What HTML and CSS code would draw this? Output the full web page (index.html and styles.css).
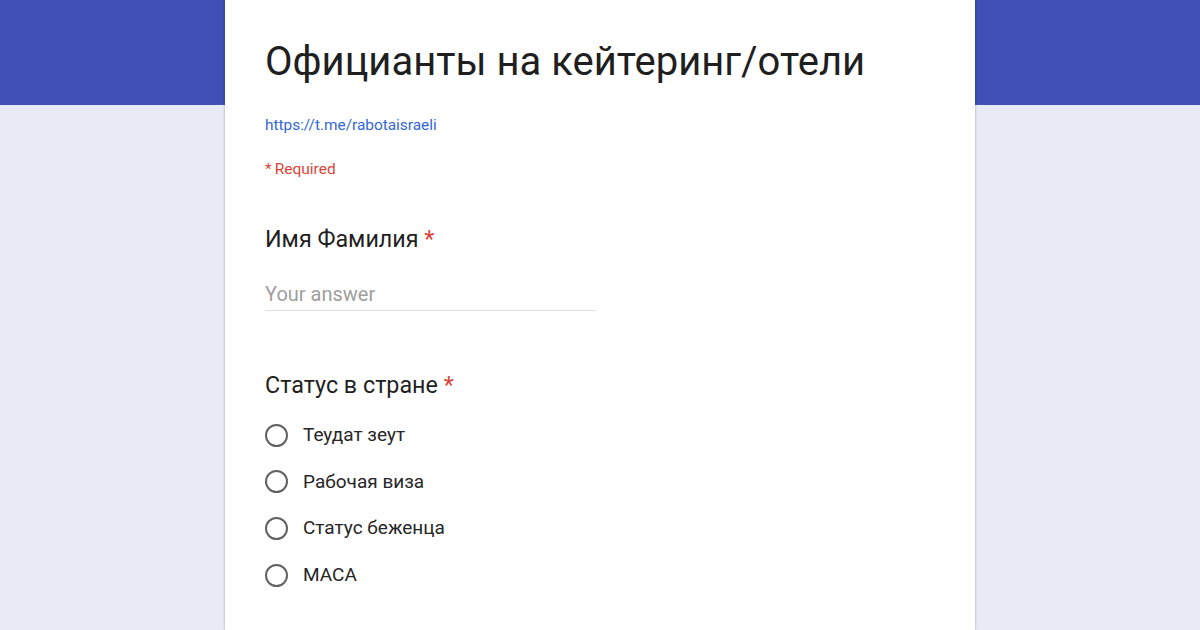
FILE: index.html
```html
<!DOCTYPE html>
<html lang="ru">
<head>
<meta charset="utf-8">
<link rel="stylesheet" href="styles.css">
</head>
<body>
<div class="banner"></div>
<main class="card">
  <h1 class="title">Официанты на кейтеринг/отели</h1>
  <a class="link" href="#">https://t.me/rabotaisraeli</a>
  <div class="required"><span class="star">*</span>Required</div>

  <section class="question q-text">
    <div class="q-title">Имя Фамилия <span class="ast">*</span></div>
    <div class="answer">Your answer</div>
  </section>

  <section class="question q-radio">
    <div class="q-title">Статус в стране <span class="ast">*</span></div>
    <ul class="options">
      <li class="option"><span class="radio"></span>Теудат зеут</li>
      <li class="option"><span class="radio"></span>Рабочая виза</li>
      <li class="option"><span class="radio"></span>Статус беженца</li>
      <li class="option"><span class="radio"></span>МАСА</li>
    </ul>
  </section>
</main>
</body>
</html>
```

FILE: styles.css
```css
* { box-sizing: border-box; }
html, body {
  margin: 0;
  padding: 0;
  width: 1200px;
  height: 630px;
  overflow: hidden;
  background: #e8eaf6;
  font-family: Roboto, "Liberation Sans", sans-serif;
}
.banner {
  position: absolute;
  left: 0;
  top: 0;
  width: 1200px;
  height: 105px;
  background: #3f51b5;
}
.card {
  position: relative;
  width: 750px;
  margin: 0 auto;
  min-height: 630px;
  background: #fff;
  box-shadow: 0 0 2px rgba(0,0,0,0.25), 0 0 4px rgba(0,0,0,0.08);
  padding: 36px 40px 0 40px;
  display: flex;
  flex-direction: column;
  align-items: flex-start;
}
.title {
  margin: 0;
  font-weight: 400;
  font-size: 40px;
  line-height: 52px;
  color: #1f1f1f;
}
.link {
  margin-top: 27px;
  font-size: 15.4px;
  line-height: 20px;
  color: #3367d6;
  text-decoration: none;
}
.required {
  margin-top: 24px;
  font-size: 15.5px;
  line-height: 20px;
  color: #db4437;
}
.star { margin-right: 3px; }
.question { width: 100%; }
.q-text { margin-top: 45px; }
.q-title {
  font-size: 23.3px;
  line-height: 30px;
  color: #1f1f1f;
}
.ast { color: #db4437; }
.answer {
  margin-top: 27px;
  width: 331px;
  font-size: 20px;
  line-height: 26px;
  color: #9e9e9e;
  border-bottom: 1px solid #e0e0e0;
  padding-bottom: 3px;
}
.q-radio { margin-top: 59px; }
.options {
  list-style: none;
  margin: 23px 0 0 0;
  padding: 0;
  display: flex;
  flex-direction: column;
  gap: 22.7px;
}
.option {
  display: flex;
  align-items: center;
  font-size: 19px;
  line-height: 24px;
  color: #262626;
}
.radio {
  width: 23px;
  height: 23px;
  border: 2px solid #616161;
  border-radius: 50%;
  margin-right: 15px;
  flex: none;
}
```
